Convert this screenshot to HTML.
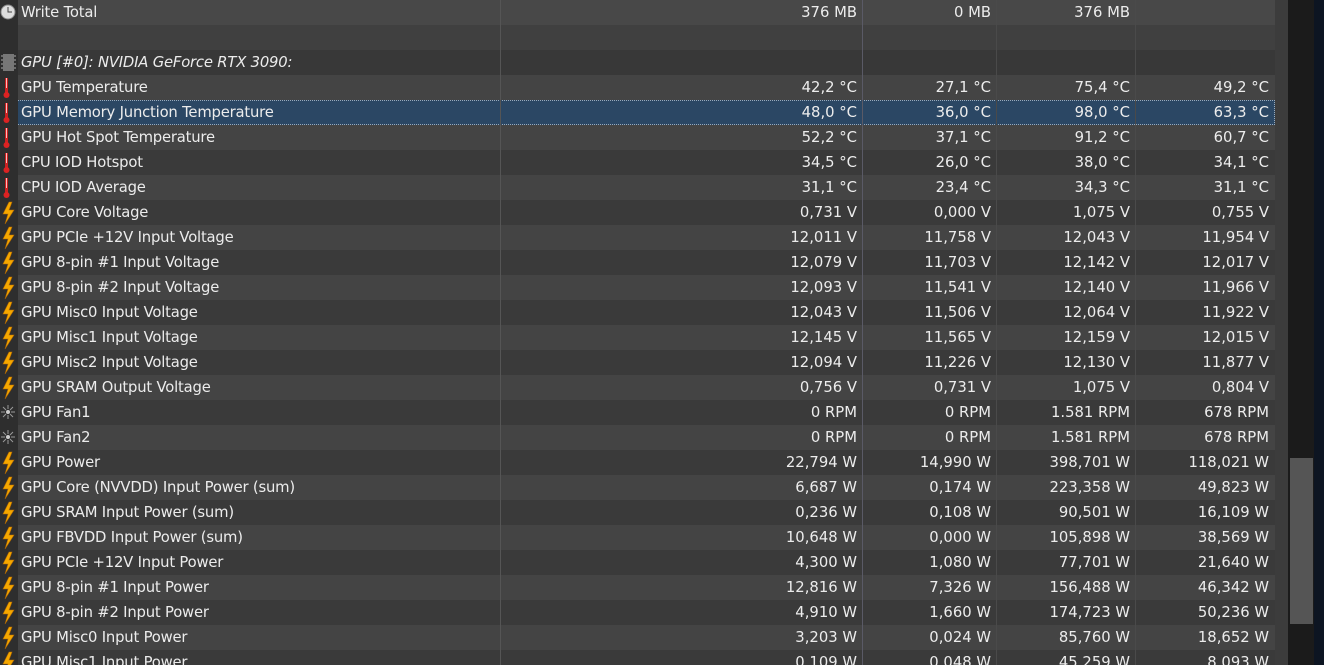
<!DOCTYPE html>
<html style="width:1324px;height:665px;overflow:hidden"><head><meta charset="utf-8"><style>
*{margin:0;padding:0;box-sizing:border-box}
body{width:1324px;height:665px;overflow:hidden;background:#3c3c3c;font-family:Tahoma,"DejaVu Sans","Liberation Sans",sans-serif;font-size:14.8px;color:#ececec;position:relative}
.row{position:absolute;left:0;width:1275px;height:25px;line-height:26px}
.l{background:#444}.d{background:#3a3a3a}
.sel{background:#2b4764;outline:1px dotted #9ab;outline-offset:-1px}
.ic{position:absolute;left:0;top:0;width:18px;height:25px;background:#2e2e2e}
.n{position:absolute;left:21px;white-space:nowrap;letter-spacing:-0.2px}
.v{position:absolute;text-align:right;white-space:nowrap}
.c1{right:418px}.c2{right:284px}.c3{right:145px}.c4{right:6px}
.vl{position:absolute;top:0;height:665px;width:1px;background:#555}
</style></head><body>
<div id="t"></div>
<div class="vl" style="left:500px"></div>
<div class="vl" style="left:862px;background:#5a5a66"></div>
<div class="vl" style="left:996px;background:#4a4a4a"></div>
<div class="vl" style="left:1135px;background:#4a4a4a"></div>
<div style="position:absolute;left:1275px;top:0;width:13px;height:665px;background:#3c3c3c"></div>
<div style="position:absolute;left:1288px;top:0;width:26px;height:665px;background:#1b1b1b"></div>
<div style="position:absolute;left:1290px;top:458px;width:23px;height:166px;background:#555"></div>
<div style="position:absolute;left:1314px;top:0;width:10px;height:665px;background:#0d1522"></div>
<script>
var R=[
["c","Write Total","376 MB","0 MB","376 MB",""],
["","","","","",""],
["g","GPU [#0]: NVIDIA GeForce RTX 3090:","","","",""],
["t","GPU Temperature","42,2 °C","27,1 °C","75,4 °C","49,2 °C"],
["t","GPU Memory Junction Temperature","48,0 °C","36,0 °C","98,0 °C","63,3 °C"],
["t","GPU Hot Spot Temperature","52,2 °C","37,1 °C","91,2 °C","60,7 °C"],
["t","CPU IOD Hotspot","34,5 °C","26,0 °C","38,0 °C","34,1 °C"],
["t","CPU IOD Average","31,1 °C","23,4 °C","34,3 °C","31,1 °C"],
["b","GPU Core Voltage","0,731 V","0,000 V","1,075 V","0,755 V"],
["b","GPU PCIe +12V Input Voltage","12,011 V","11,758 V","12,043 V","11,954 V"],
["b","GPU 8-pin #1 Input Voltage","12,079 V","11,703 V","12,142 V","12,017 V"],
["b","GPU 8-pin #2 Input Voltage","12,093 V","11,541 V","12,140 V","11,966 V"],
["b","GPU Misc0 Input Voltage","12,043 V","11,506 V","12,064 V","11,922 V"],
["b","GPU Misc1 Input Voltage","12,145 V","11,565 V","12,159 V","12,015 V"],
["b","GPU Misc2 Input Voltage","12,094 V","11,226 V","12,130 V","11,877 V"],
["b","GPU SRAM Output Voltage","0,756 V","0,731 V","1,075 V","0,804 V"],
["f","GPU Fan1","0 RPM","0 RPM","1.581 RPM","678 RPM"],
["f","GPU Fan2","0 RPM","0 RPM","1.581 RPM","678 RPM"],
["b","GPU Power","22,794 W","14,990 W","398,701 W","118,021 W"],
["b","GPU Core (NVVDD) Input Power (sum)","6,687 W","0,174 W","223,358 W","49,823 W"],
["b","GPU SRAM Input Power (sum)","0,236 W","0,108 W","90,501 W","16,109 W"],
["b","GPU FBVDD Input Power (sum)","10,648 W","0,000 W","105,898 W","38,569 W"],
["b","GPU PCIe +12V Input Power","4,300 W","1,080 W","77,701 W","21,640 W"],
["b","GPU 8-pin #1 Input Power","12,816 W","7,326 W","156,488 W","46,342 W"],
["b","GPU 8-pin #2 Input Power","4,910 W","1,660 W","174,723 W","50,236 W"],
["b","GPU Misc0 Input Power","3,203 W","0,024 W","85,760 W","18,652 W"],
["b","GPU Misc1 Input Power","0,109 W","0,048 W","45,259 W","8,093 W"]];
var I={
c:'<svg width="18" height="25"><circle cx="8" cy="12" r="7" fill="#ddd" stroke="#888"/><path d="M8 7v5h4" stroke="#444" fill="none"/></svg>',
g:'<svg width="18" height="25"><rect x="3" y="4" width="11" height="17" fill="#777"/><path d="M1 6h2M1 10h2M1 14h2M1 18h2M14 6h2M14 10h2M14 14h2M14 18h2" stroke="#aaa"/></svg>',
t:'<svg width="18" height="25"><rect x="5" y="3" width="3" height="16" fill="#c22"/><circle cx="6.5" cy="20" r="3" fill="#d22"/><rect x="6" y="3" width="1" height="10" fill="#fbb"/></svg>',
b:'<svg width="18" height="25"><path d="M9 2L3 14h5l-3 10 9-14H9l3-8z" fill="#f5a800" stroke="#b56a00" stroke-width=".6"/></svg>',
f:'<svg width="18" height="25"><circle cx="8" cy="12" r="2" fill="#ccc"/><path d="M8 5v4M8 15v4M1 12h4M11 12h4M3 7l3 3M10 14l3 3M13 7l-3 3M6 14l-3 3" stroke="#999"/></svg>'};
var h='';
R.forEach(function(r,i){
var cls=i<3?'':(i==4?'sel':(i%2?'l':'d'));
var bg=i==0?'background:#484848;':i==1?'background:#404040;':i==2?'background:#383838;':'';
h+='<div class="row '+cls+'" style="top:'+(i*25)+'px;'+bg+'"><div class="ic">'+(I[r[0]]||'')+'</div>'+
'<div class="n"'+(r[0]=='g'?' style="font-style:italic"':'')+'>'+r[1]+'</div>'+
'<div class="v c1">'+r[2]+'</div><div class="v c2">'+r[3]+'</div><div class="v c3">'+r[4]+'</div><div class="v c4">'+r[5]+'</div></div>';});
document.getElementById('t').innerHTML=h;
</script>
</body></html>
